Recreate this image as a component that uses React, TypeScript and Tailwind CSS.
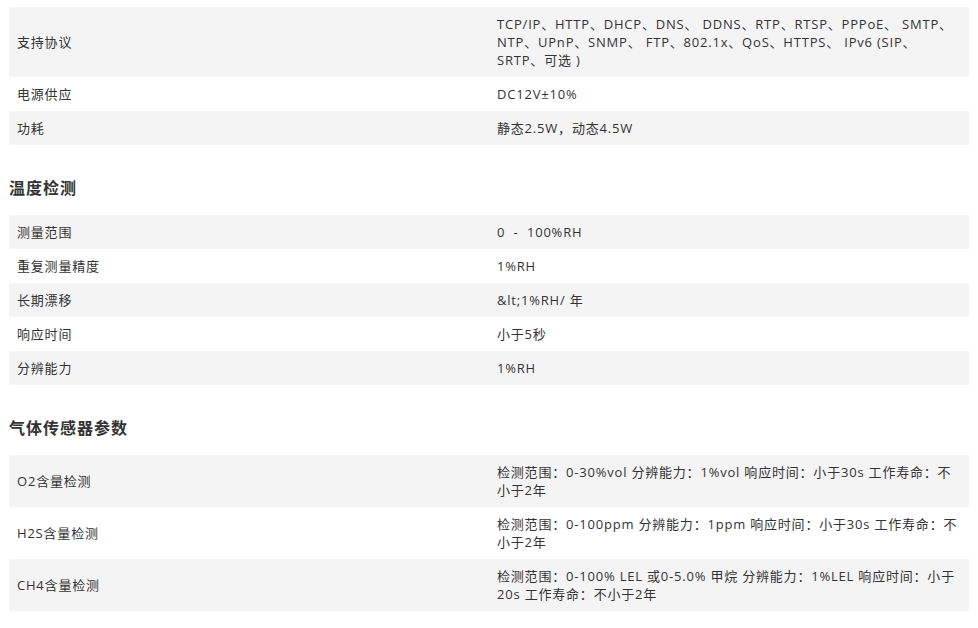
import React from 'react';

type Row = [string, string];

const power: Row[] = [
  [
    '支持协议',
    'TCP/IP、HTTP、DHCP、DNS、 DDNS、RTP、RTSP、PPPoE、 SMTP、NTP、UPnP、SNMP、 FTP、802.1x、QoS、HTTPS、 IPv6 (SIP、SRTP、可选 )'
  ],
  ['电源供应', 'DC12V±10%'],
  ['功耗', '静态2.5W，动态4.5W']
];

const temperature: Row[] = [
  ['测量范围', '0  -  100%RH'],
  ['重复测量精度', '1%RH'],
  ['长期漂移', '&lt;1%RH/ 年'],
  ['响应时间', '小于5秒'],
  ['分辨能力', '1%RH']
];

const gas: Row[] = [
  ['O2含量检测', '检测范围：0-30%vol 分辨能力：1%vol 响应时间：小于30s 工作寿命：不小于2年'],
  ['H2S含量检测', '检测范围：0-100ppm 分辨能力：1ppm 响应时间：小于30s 工作寿命：不小于2年'],
  ['CH4含量检测', '检测范围：0-100% LEL 或0-5.0% 甲烷 分辨能力：1%LEL 响应时间：小于20s 工作寿命：不小于2年']
];

const SpecTable = ({ rows }: { rows: Row[] }) => (
  <table className="w-full table-fixed border-collapse">
    <tbody>
      {rows.map(([label, value], i) => (
        <tr key={label} className={i % 2 === 0 ? 'bg-[#f4f4f4]' : 'bg-white'}>
          <td className="w-1/2 px-2 py-2 align-middle">{label}</td>
          <td className="w-1/2 px-2 py-2 align-middle whitespace-pre-wrap">{value}</td>
        </tr>
      ))}
    </tbody>
  </table>
);

const App = () => {
  return (
    <div className="px-[9px] pt-[7px] pb-4 bg-white text-[13px] leading-[18px] tracking-[0.8px] text-[#333] font-['Open_Sans','Noto_Sans_CJK_SC',sans-serif]">
      <SpecTable rows={power} />
      <h3 className="mt-[31px] mb-[15px] text-[16px] leading-6 font-bold tracking-[1px]">温度检测</h3>
      <SpecTable rows={temperature} />
      <h3 className="mt-[31px] mb-[15px] text-[16px] leading-6 font-bold tracking-[1px]">气体传感器参数</h3>
      <SpecTable rows={gas} />
    </div>
  );
};

export default App;
